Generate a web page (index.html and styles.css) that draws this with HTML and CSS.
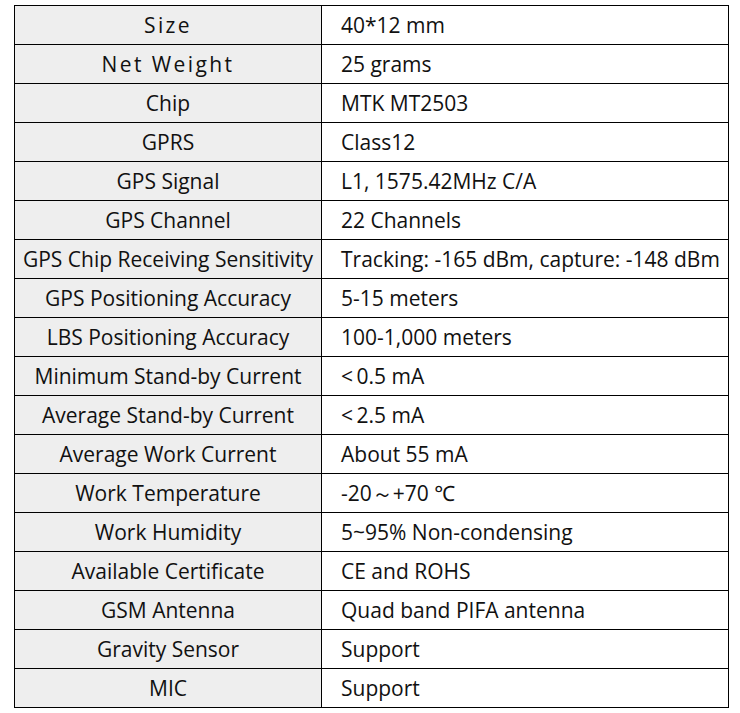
FILE: index.html
```html
<!DOCTYPE html>
<html>
<head>
<meta charset="utf-8">
<link rel="stylesheet" href="styles.css">
</head>
<body>
<table class="spec">
  <tr><td class="k spaced">Size</td><td class="v">40*12 mm</td></tr>
  <tr><td class="k spaced">Net Weight</td><td class="v">25 grams</td></tr>
  <tr><td class="k">Chip</td><td class="v">MTK MT2503</td></tr>
  <tr><td class="k">GPRS</td><td class="v">Class12</td></tr>
  <tr><td class="k">GPS Signal</td><td class="v">L1, 1575.42MHz C/A</td></tr>
  <tr><td class="k">GPS Channel</td><td class="v">22 Channels</td></tr>
  <tr><td class="k">GPS Chip Receiving Sensitivity</td><td class="v">Tracking: -165 dBm, capture: -148 dBm</td></tr>
  <tr><td class="k">GPS Positioning Accuracy</td><td class="v">5-15 meters</td></tr>
  <tr><td class="k">LBS Positioning Accuracy</td><td class="v">100-1,000 meters</td></tr>
  <tr><td class="k">Minimum Stand-by Current</td><td class="v">&lt;&#8201;0.5 mA</td></tr>
  <tr><td class="k">Average Stand-by Current</td><td class="v">&lt;&#8201;2.5 mA</td></tr>
  <tr><td class="k">Average Work Current</td><td class="v">About 55 mA</td></tr>
  <tr><td class="k">Work Temperature</td><td class="v">-20～+70 ℃</td></tr>
  <tr><td class="k">Work Humidity</td><td class="v">5~95% Non-condensing</td></tr>
  <tr><td class="k">Available Certificate</td><td class="v">CE and ROHS</td></tr>
  <tr><td class="k">GSM Antenna</td><td class="v">Quad band PIFA antenna</td></tr>
  <tr><td class="k">Gravity Sensor</td><td class="v">Support</td></tr>
  <tr><td class="k">MIC</td><td class="v">Support</td></tr>
</table>
</body>
</html>
```

FILE: styles.css
```css
html, body {
  margin: 0;
  padding: 0;
  background: #ffffff;
}
body {
  padding: 5px 0 0 14px;
  font-family: "Open Sans", "Noto Sans", sans-serif;
  font-size: 21px;
  color: #111111;
}
.spec {
  border-collapse: collapse;
  width: 715px;
  table-layout: fixed;
}
.spec td {
  border: 1px solid #000000;
  height: 39px;
  padding: 0;
  box-sizing: border-box;
  white-space: nowrap;
  vertical-align: middle;
  line-height: 24px;
}
.spec .k {
  width: 307px;
  background: #eeeeee;
  text-align: center;
}
.spec .v {
  padding-left: 19px;
  background: #ffffff;
}
.spaced {
  letter-spacing: 2.4px;
}
```
